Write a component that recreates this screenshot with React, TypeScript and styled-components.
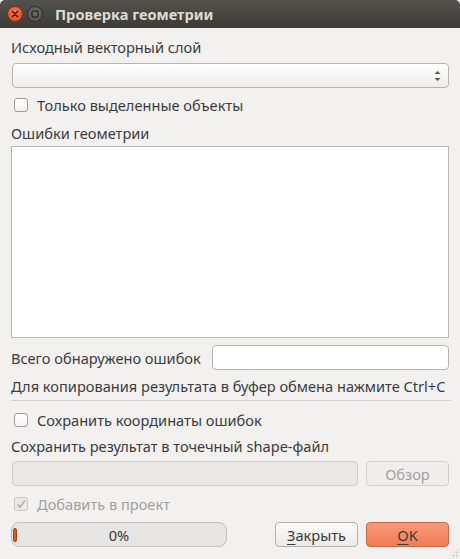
import React from "react";
import styled, { createGlobalStyle } from "styled-components";

const Global = createGlobalStyle`
  html, body { margin: 0; padding: 0; background: #f2f1f0; }
  body { font-family: "Noto Sans", "Open Sans", sans-serif; font-size: 14.6px; color: #3c3c3c; }
  * { box-sizing: border-box; }
`;

const Window = styled.div`
  width: 460px;
  height: 559px;
  background: #f2f1f0;
  display: flex;
  flex-direction: column;
  position: relative;
  overflow: hidden;
`;

const TitleBar = styled.div`
  height: 28px;
  background: linear-gradient(#53524d, #3c3b37);
  border-radius: 5px 5px 0 0;
  display: flex;
  align-items: center;
  padding-left: 7px;
  gap: 4px;
  flex-shrink: 0;
`;

const WinBtn = styled.div<{ $close?: boolean }>`
  width: 16px;
  height: 16px;
  border-radius: 50%;
  background: ${(p) =>
    p.$close
      ? "radial-gradient(circle at 50% 35%, #f5784a, #e0461b)"
      : "radial-gradient(circle at 50% 35%, #6e6d68, #54534f)"};
  border: 1px solid ${(p) => (p.$close ? "#8a2e12" : "#2f2e2b")};
  display: flex;
  align-items: center;
  justify-content: center;
`;

const Title = styled.div`
  margin-left: 8px;
  color: #dfdbd2;
  font-weight: bold;
  font-size: 14.6px;
`;

const Body = styled.div`
  flex: 1;
  display: flex;
  flex-direction: column;
  padding: 10px 11px 0 11px;
`;

const Text = styled.div<{ $mt?: number; $disabled?: boolean }>`
  margin-top: ${(p) => p.$mt ?? 0}px;
  height: 18px;
  line-height: 18px;
  white-space: nowrap;
  color: ${(p) => (p.$disabled ? "#a3a19e" : "#3c3c3c")};
`;

const Combo = styled.div<{ $mt?: number }>`
  margin-top: ${(p) => p.$mt ?? 0}px;
  height: 25px;
  margin-left: 1px;
  border: 1px solid #b6b4b0;
  border-radius: 4px;
  background: linear-gradient(#ffffff, #eeedec);
  display: flex;
  justify-content: flex-end;
  align-items: center;
  padding-right: 7px;
`;

const CheckRow = styled.label<{ $mt?: number; $disabled?: boolean }>`
  margin-top: ${(p) => p.$mt ?? 0}px;
  height: 18px;
  display: flex;
  align-items: center;
  gap: 9px;
  padding-left: 3px;
  white-space: nowrap;
  color: ${(p) => (p.$disabled ? "#a3a19e" : "#3c3c3c")};
`;

const Box = styled.span<{ $disabled?: boolean }>`
  width: 14px;
  height: 14px;
  border: 1px solid ${(p) => (p.$disabled ? "#c9c7c4" : "#9e9c98")};
  border-radius: 3px;
  background: ${(p) => (p.$disabled ? "#ebeae9" : "linear-gradient(#ffffff, #f4f3f2)")};
  display: flex;
  align-items: center;
  justify-content: center;
`;

const TextArea = styled.div<{ $mt?: number }>`
  margin-top: ${(p) => p.$mt ?? 0}px;
  height: 192px;
  background: #ffffff;
  border: 1px solid #b9b7b3;
`;

const Row = styled.div<{ $mt?: number; $gap?: number }>`
  margin-top: ${(p) => p.$mt ?? 0}px;
  display: flex;
  align-items: center;
  gap: ${(p) => p.$gap ?? 8}px;
`;

const Input = styled.div<{ $disabled?: boolean }>`
  flex: 1;
  height: 25px;
  border: 1px solid ${(p) => (p.$disabled ? "#cfcdca" : "#b6b4b0")};
  border-radius: 4px;
  background: ${(p) => (p.$disabled ? "#e9e8e7" : "#ffffff")};
  margin-left: 1px;
`;

const Separator = styled.div<{ $mt?: number }>`
  margin-top: ${(p) => p.$mt ?? 0}px;
  height: 1px;
  background: #d3d1ce;
  margin-right: -2px;
`;

const Button = styled.div<{ $primary?: boolean; $disabled?: boolean }>`
  width: 83px;
  height: 25px;
  border-radius: 4px;
  border: 1px solid ${(p) => (p.$primary ? "#c8674a" : p.$disabled ? "#d2d0cd" : "#b3b1ad")};
  background: ${(p) =>
    p.$primary
      ? "linear-gradient(#f89a79, #f27c55)"
      : p.$disabled
      ? "#efeeed"
      : "linear-gradient(#fbfbfa, #eceae8)"};
  color: ${(p) => (p.$disabled ? "#a3a19e" : "#3c3c3c")};
  display: flex;
  align-items: center;
  justify-content: center;
  flex-shrink: 0;
`;

const U = styled.span`
  text-decoration: underline;
  text-underline-offset: 3px;
`;

const Progress = styled.div`
  width: 216px;
  height: 25px;
  border: 1px solid #c3c1bd;
  border-radius: 8px;
  background: #e6e5e3;
  position: relative;
  display: flex;
  align-items: center;
  justify-content: center;
`;

const Chunk = styled.div`
  position: absolute;
  left: 1px;
  top: 5px;
  width: 4px;
  height: 14px;
  border-radius: 2px;
  background: #e2591f;
  border: 1px solid #a8401a;
`;

const Spacer = styled.div`
  flex: 1;
`;

const Grip = styled.div`
  position: absolute;
  right: 1px;
  bottom: 1px;
  width: 10px;
  height: 10px;
  background-image: radial-gradient(circle, #c4c2be 0.9px, transparent 1.1px);
  background-size: 3px 3px;
  clip-path: polygon(100% 0, 100% 100%, 0 100%);
`;

export default function App() {
  return (
    <>
      <Global />
      <Window>
        <TitleBar>
          <WinBtn $close>
            <svg width="8" height="8" viewBox="0 0 8 8">
              <path d="M1.5 1.5 L6.5 6.5 M6.5 1.5 L1.5 6.5" stroke="#3b1a0c" strokeWidth="1.6" strokeLinecap="round" />
            </svg>
          </WinBtn>
          <WinBtn>
            <svg width="8" height="8" viewBox="0 0 8 8">
              <rect x="1" y="1" width="6" height="6" rx="1" fill="none" stroke="#2d2c29" strokeWidth="1.5" />
            </svg>
          </WinBtn>
          <Title>Проверка геометрии</Title>
        </TitleBar>
        <Body>
          <Text>Исходный векторный слой</Text>
          <Combo $mt={7}>
            <svg width="7" height="12" viewBox="0 0 7 12">
              <path d="M0.5 4 L3.5 1 L6.5 4 Z" fill="#5a5955" />
              <path d="M0.5 8 L3.5 11 L6.5 8 Z" fill="#5a5955" />
            </svg>
          </Combo>
          <CheckRow $mt={8}>
            <Box />
            Только выделенные объекты
          </CheckRow>
          <Text $mt={10}>Ошибки геометрии</Text>
          <TextArea $mt={4} />
          <Row $mt={7} $gap={10}>
            <Text>Всего обнаружено ошибок</Text>
            <Input />
          </Row>
          <Text $mt={7}>Для копирования результата в буфер обмена нажмите Ctrl+C</Text>
          <Separator $mt={5} />
          <CheckRow $mt={10}>
            <Box />
            Сохранить координаты ошибок
          </CheckRow>
          <Text $mt={8}>Сохранить результат в точечный shape-файл</Text>
          <Row $mt={6}>
            <Input $disabled />
            <Button $disabled>Обзор</Button>
          </Row>
          <CheckRow $mt={9} $disabled>
            <Box $disabled>
              <svg width="12" height="12" viewBox="0 0 12 12">
                <path d="M2.5 6.5 L5 9 L10 2.5" fill="none" stroke="#b8b6b3" strokeWidth="2" />
              </svg>
            </Box>
            Добавить в проект
          </CheckRow>
          <Row $mt={9}>
            <Progress>
              <Chunk />
              0%
            </Progress>
            <Spacer />
            <Button>
              <U>З</U>акрыть
            </Button>
            <Button $primary>
              <U>O</U>K
            </Button>
          </Row>
        </Body>
        <Grip />
      </Window>
    </>
  );
}
